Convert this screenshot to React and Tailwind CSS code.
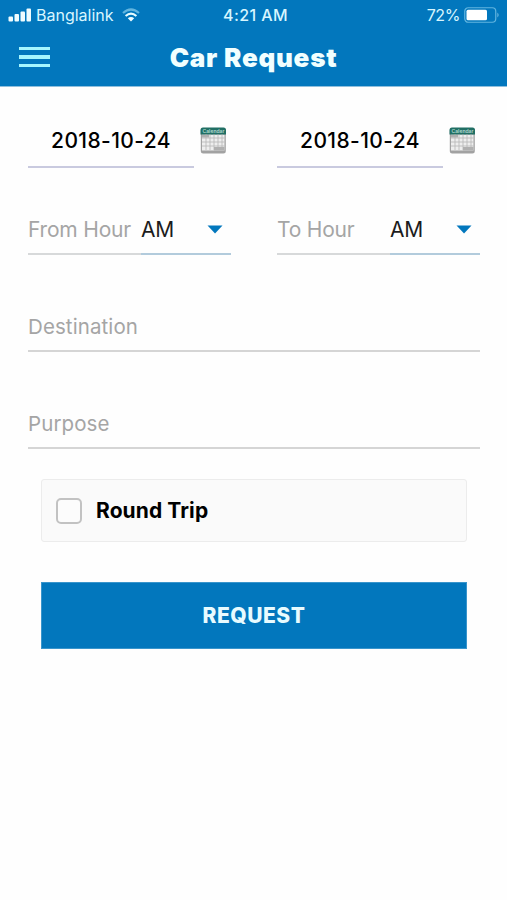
const DATE = "2018-10-24"

const App = () => (
  <div className="h-[900px] w-[507px] overflow-hidden bg-[#fefefe] font-['Inter','Liberation_Sans',sans-serif] text-black">
    <div className="h-[87px] border-b border-[#8fbfdd] bg-[#0277bd]">
      <StatusBar />
      <header className="grid h-[54px] grid-cols-[1fr_auto_1fr] items-center pl-[19px] pr-[19px]">
        <button aria-label="Menu" className="flex w-[31px] flex-col gap-[5px]">
          <span className="h-[3.5px] bg-[#a5f6ff]" />
          <span className="h-[3.5px] bg-[#a5f6ff]" />
          <span className="h-[3.5px] bg-[#a5f6ff]" />
        </button>
        <h1 className="whitespace-nowrap pt-px text-[26px] font-black leading-none tracking-[0.75px] text-[#f1ffff]">
          Car Request
        </h1>
      </header>
    </div>

    <main className="pl-7 pr-[27px]">
      {/* Start and end of the trip */}
      <div className="flex h-[81px] gap-[46px] pt-[25px]">
        <DateField />
        <DateField />
      </div>
      <div className="flex h-[87px] gap-[46px] pt-[34px]">
        <HourField label="From Hour" />
        <HourField label="To Hour" />
      </div>

      <TextField label="Destination" />
      <TextField label="Purpose" />

      <div className="mx-[13px] mt-[30px] flex h-[63px] items-center rounded-[3px] border border-[#ececec] bg-[#fafafa] pl-[14px]">
        <span className="h-[26px] w-[26px] rounded-[5px] border-2 border-[#c2c2c2] bg-[#fcfcfc]" />
        <span className="ml-[14px] whitespace-nowrap text-[21px] font-bold leading-none tracking-[0.1px]">
          Round Trip
        </span>
      </div>

      <button className="mx-[13px] mt-10 flex h-[67px] w-[426px] items-center justify-center border border-[#3995cc] bg-[#0277bd] text-[21px] font-extrabold leading-none tracking-[0.5px] text-[#e8fbff]">
        REQUEST
      </button>
    </main>
  </div>
)

const StatusBar = () => (
  <div className="grid h-[30px] grid-cols-[1fr_auto_1fr] items-center pl-[8px] pr-[7px] text-[16px] leading-none text-[#d8f6ff]">
    <div className="flex items-center">
      <svg width="24" height="14" viewBox="0 0 24 14" fill="#effcff">
        <rect x="0.5" y="8.5" width="4.5" height="5" rx="1" />
        <rect x="6.5" y="6" width="4.5" height="7.5" rx="1" />
        <rect x="12.5" y="3.5" width="4.5" height="10" rx="1" />
        <rect x="18.5" y="0.5" width="4.5" height="13" rx="1" />
      </svg>
      <span className="ml-[4px] w-[78px] whitespace-nowrap">Banglalink</span>
      <svg className="ml-[8px]" width="18" height="14" viewBox="0 0 18 14" fill="none">
        <path d="M1 5Q9-2 17 5" stroke="#62b5df" strokeWidth="2.2" />
        <path d="M3.6 8Q9 3.3 14.4 8" stroke="#e6fbff" strokeWidth="2.2" />
        <path d="M5.8 10.3Q9 7.5 12.2 10.3L9 13.5Z" fill="#effcff" />
      </svg>
    </div>
    <span className="whitespace-nowrap pl-[3px] font-medium tracking-[0.4px]">4:21 AM</span>
    <div className="flex items-center justify-end">
      <span className="whitespace-nowrap tracking-[-0.4px]">72%</span>
      <svg className="ml-[4px]" width="36" height="16" viewBox="0 0 36 16">
        <rect x="0.75" y="0.75" width="31" height="14.5" rx="3.5" fill="none" stroke="#62b5df" strokeWidth="1.2" />
        <rect x="2.5" y="2.8" width="20.5" height="10.5" rx="1.5" fill="#fff" />
        <path d="M33.5 5.5Q35.5 8 33.5 10.5Z" fill="#8acbea" />
      </svg>
    </div>
  </div>
)

const DateField = () => (
  <div className="flex w-[203px] shrink-0">
    <div className="flex h-[56px] w-[166px] items-center justify-center border-b-2 border-[#c9cadf] pt-[2px] text-[21px] font-medium leading-none tracking-[0.4px]">
      <span className="whitespace-nowrap">{DATE}</span>
    </div>
    <CalendarIcon />
  </div>
)

const HourField = ({ label }) => (
  <div className="flex h-[53px] w-[203px] shrink-0 text-[21px] leading-none tracking-[-0.2px]">
    <div className="flex w-[113px] items-center border-b-2 border-[#d7d9da] pt-[4px] text-[#a5a5a5]">
      <span className="whitespace-nowrap">{label}</span>
    </div>
    <div className="flex w-[90px] items-center justify-between border-b-2 border-[#b2cbdc] pr-[8px] pt-[4px] text-[#1c1c1c]">
      <span>AM</span>
      <svg width="16" height="9" viewBox="0 0 16 9">
        <path d="M0.5 0.5H15.5L8 8.5Z" fill="#0277bd" />
      </svg>
    </div>
  </div>
)

const TextField = ({ label }) => (
  <div className="flex h-[97px] items-end border-b-2 border-[#d5d5d5] pb-[12.5px] text-[20.5px] leading-none tracking-[0.1px] text-[#a5a5a5]">
    {label}
  </div>
)

const CalendarIcon = () => (
  <svg className="ml-[5.5px] mt-[15px]" width="27" height="28" viewBox="0 0 27 28">
    <rect x="0.8" y="1" width="25" height="25.5" rx="2.5" fill="#a2a2a2" />
    <rect x="2" y="7.5" width="22.5" height="16" fill="#eeeeee" />
    <path d="M0.5 7.5V3Q0.5 0.5 3 0.5H23.5Q26 0.5 26 3V7.5Z" fill="#216f64" />
    <text x="13.5" y="5.8" textAnchor="middle" fontSize="5" fontWeight="600" fill="#b5dcd3">Calendar</text>
    <path d="M2 11H24.5M2 15H24.5M2 19H24.5M6 7.5V23M10 7.5V23M14 7.5V23M18 7.5V23M22 7.5V23" stroke="#bababa" strokeWidth="0.9" />
    <path d="M2 8H9V10.5H2ZM14 20H24.5V23.5H14Z" fill="#b0b0b0" />
  </svg>
)

export default App
